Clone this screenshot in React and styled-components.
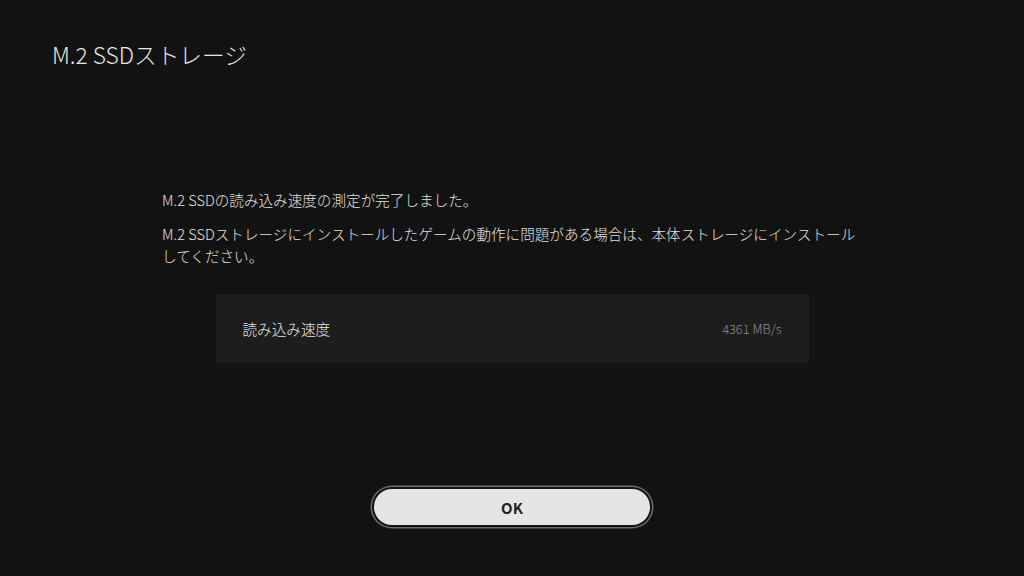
import React from 'react'
import styled, { createGlobalStyle } from 'styled-components'

const GlobalStyle = createGlobalStyle`
  html, body {
    margin: 0;
    padding: 0;
    background: #121212;
  }
  body {
    font-family: "Noto Sans CJK JP", "Noto Sans", sans-serif;
    color: #e4e4e4;
  }
`

const Screen = styled.div`
  width: 1024px;
  height: 576px;
  box-sizing: border-box;
  padding: 40px 0 0;
  display: flex;
  flex-direction: column;
  align-items: center;
  background: #121212;
  overflow: hidden;
`

const Title = styled.h1`
  align-self: flex-start;
  margin: 0 0 0 52px;
  font-size: 22.7px;
  font-weight: 300;
  line-height: 30px;
  color: #e6e6e6;
`

const Message = styled.div`
  width: 700px;
  margin-top: 119px;
  font-size: 14.6px;
  font-weight: 300;
  line-height: 22px;
  color: #e0e0e0;
  p {
    margin: 0 0 12px;
  }
`

const ResultPanel = styled.div`
  width: 593px;
  height: 69px;
  margin-top: 15px;
  box-sizing: border-box;
  padding: 0 27px;
  display: flex;
  align-items: center;
  justify-content: space-between;
  background: #1d1d1d;
`

const Label = styled.span`
  font-size: 14.6px;
  font-weight: 300;
  color: #e6e6e6;
`

const Value = styled.span`
  font-size: 12.8px;
  font-weight: 300;
  color: #8e8e8e;
`

const OkButton = styled.button`
  width: 276px;
  height: 36px;
  margin-top: 126px;
  padding: 0;
  border: none;
  border-radius: 18px;
  background: #e5e5e5;
  box-shadow: 0 0 0 2px #141414, 0 0 0 3.5px #6c6b72;
  font-family: "Noto Sans CJK JP", "Noto Sans", sans-serif;
  font-size: 15px;
  font-weight: 700;
  color: #222;
  cursor: pointer;
`

const App = () => {
  return (
    <>
      <GlobalStyle />
      <Screen>
        <Title>M.2 SSDストレージ</Title>
        <Message>
          <p>M.2 SSDの読み込み速度の測定が完了しました。</p>
          <p>M.2 SSDストレージにインストールしたゲームの動作に問題がある場合は、本体ストレージにインストールしてください。</p>
        </Message>
        <ResultPanel>
          <Label>読み込み速度</Label>
          <Value>4361 MB/s</Value>
        </ResultPanel>
        <OkButton>OK</OkButton>
      </Screen>
    </>
  )
}

export default App
